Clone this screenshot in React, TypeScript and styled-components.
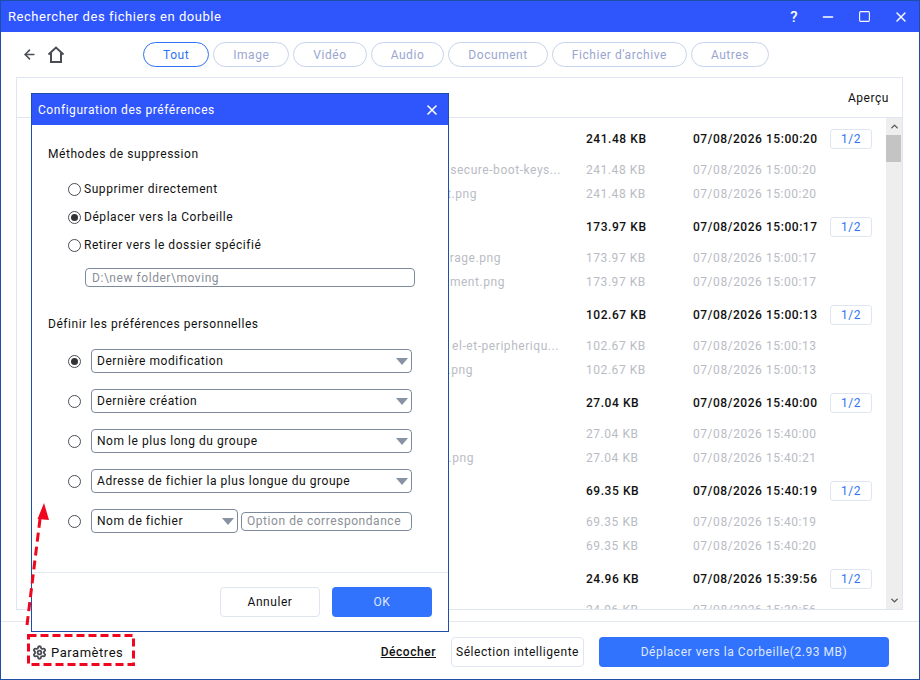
import React from "react"
import styled, { createGlobalStyle } from "styled-components"
import { ArrowLeft, ChevronDown, ChevronUp, Minus, Settings, Square, X } from "lucide-react"

const FONT = `Roboto, "Liberation Sans", sans-serif`

const GlobalStyle = createGlobalStyle`
  html, body {
    margin: 0;
    padding: 0;
    background: #fff;
  }
  body {
    font-family: ${FONT};
    font-size: 12px;
    letter-spacing: 0.55px;
  }
`

const tabs = ["Tout", "Image", "Vidéo", "Audio", "Document", "Fichier d'archive", "Autres"]

interface SubRow {
  name: string
  end: number
  date: string
}

interface Group {
  size: string
  date: string
  subs: SubRow[]
}

const groups: Group[] = [
  {
    size: "241.48 KB",
    date: "07/08/2026 15:00:20",
    subs: [
      { name: "secure-boot-keys...", end: 561, date: "07/08/2026 15:00:20" },
      { name: "t.png", end: 477, date: "07/08/2026 15:00:20" },
    ],
  },
  {
    size: "173.97 KB",
    date: "07/08/2026 15:00:17",
    subs: [
      { name: "rage.png", end: 501, date: "07/08/2026 15:00:17" },
      { name: "nment.png", end: 505, date: "07/08/2026 15:00:17" },
    ],
  },
  {
    size: "102.67 KB",
    date: "07/08/2026 15:00:13",
    subs: [
      { name: "el-et-peripheriqu...", end: 559, date: "07/08/2026 15:00:13" },
      { name: ".png", end: 473, date: "07/08/2026 15:00:13" },
    ],
  },
  {
    size: "27.04 KB",
    date: "07/08/2026 15:40:00",
    subs: [
      { name: "", end: 0, date: "07/08/2026 15:40:00" },
      { name: ".png", end: 474, date: "07/08/2026 15:40:21" },
    ],
  },
  {
    size: "69.35 KB",
    date: "07/08/2026 15:40:19",
    subs: [
      { name: "", end: 0, date: "07/08/2026 15:40:19" },
      { name: "", end: 0, date: "07/08/2026 15:40:20" },
    ],
  },
  {
    size: "24.96 KB",
    date: "07/08/2026 15:39:56",
    subs: [{ name: "", end: 0, date: "07/08/2026 15:39:56" }],
  },
]

const deleteMethods = [
  { label: "Supprimer directement", checked: false },
  { label: "Déplacer vers la Corbeille", checked: true },
  { label: "Retirer vers le dossier spécifié", checked: false },
]

const preferences = [
  { label: "Dernière modification", checked: true },
  { label: "Dernière création", checked: false },
  { label: "Nom le plus long du groupe", checked: false },
  { label: "Adresse de fichier la plus longue du groupe", checked: false },
]

const Caret = () => (
  <svg width="12" height="7" viewBox="0 0 12 7">
    <path d="M0 0h12L6 7z" fill="#8792a3" />
  </svg>
)

const HomeIcon = () => (
  <svg width="18" height="18" viewBox="0 0 18 18" fill="none" stroke="#4a4d55" strokeWidth="2">
    <path d="M1.5 8.5 9 1.5l7.5 7" />
    <path d="M4 7v9h10V7" />
  </svg>
)

export default function App() {
  return (
    <>
      <GlobalStyle />
      <S.Window>
        <S.TitleBar>
          <S.TitleText>Rechercher des fichiers en double</S.TitleText>
          <S.WindowControls>
            <S.Help>?</S.Help>
            <Minus size={16} strokeWidth={2} />
            <Square size={13} strokeWidth={2} />
            <X size={16} strokeWidth={2} />
          </S.WindowControls>
        </S.TitleBar>

        <S.Toolbar>
          <S.NavIcons>
            <ArrowLeft size={15} strokeWidth={2.4} color="#4a4d55" />
            <HomeIcon />
          </S.NavIcons>
          <S.Tabs>
            {tabs.map((t, i) => (
              <S.Tab key={t} $active={i === 0}>{t}</S.Tab>
            ))}
          </S.Tabs>
        </S.Toolbar>

        <S.Panel>
          <S.PanelHeader>
            <S.HeaderCell>Aperçu</S.HeaderCell>
          </S.PanelHeader>
          <S.PanelBody>
            <S.List>
              {groups.map((g) => (
                <S.Group key={g.size}>
                  <S.Row $main>
                    <S.Name />
                    <S.Size>{g.size}</S.Size>
                    <S.Date>{g.date}</S.Date>
                    <S.PreviewButton>1/2</S.PreviewButton>
                  </S.Row>
                  {g.subs.map((s, i) => (
                    <S.Row key={i}>
                      <S.Name>
                        {s.name && <S.NameFragment style={{ marginRight: 586 - s.end }}>{s.name}</S.NameFragment>}
                      </S.Name>
                      <S.Size>{g.size}</S.Size>
                      <S.Date>{s.date}</S.Date>
                    </S.Row>
                  ))}
                </S.Group>
              ))}
            </S.List>
            <S.Scrollbar>
              <S.ScrollArrow><ChevronUp size={11} strokeWidth={3} /></S.ScrollArrow>
              <S.ScrollThumb />
              <S.ScrollArrow><ChevronDown size={11} strokeWidth={3} /></S.ScrollArrow>
            </S.Scrollbar>
          </S.PanelBody>
        </S.Panel>

        <S.Footer>
          <S.SettingsLink>
            <Settings size={15} strokeWidth={3} color="#4a4d55" />
            Paramètres
          </S.SettingsLink>
          <S.FooterActions>
            <S.Uncheck>Décocher</S.Uncheck>
            <S.SmartButton>Sélection intelligente</S.SmartButton>
            <S.MoveButton>Déplacer vers la Corbeille(2.93 MB)</S.MoveButton>
          </S.FooterActions>
        </S.Footer>

        <S.Modal>
          <S.ModalHeader>
            <span>Configuration des préférences</span>
            <X size={16} strokeWidth={2.4} />
          </S.ModalHeader>
          <S.ModalBody>
            <S.SectionTitle>Méthodes de suppression</S.SectionTitle>
            <S.MethodList>
              {deleteMethods.map((m) => (
                <S.Method key={m.label}>
                  <S.Radio $checked={m.checked} />
                  {m.label}
                </S.Method>
              ))}
            </S.MethodList>
            <S.PathInput>D:\new folder\moving</S.PathInput>
            <S.SectionTitle>Définir les préférences personnelles</S.SectionTitle>
            <S.PrefList>
              {preferences.map((p) => (
                <S.PrefRow key={p.label}>
                  <S.Radio $checked={p.checked} />
                  <S.Select>
                    {p.label}
                    <Caret />
                  </S.Select>
                </S.PrefRow>
              ))}
              <S.PrefRow>
                <S.Radio />
                <S.Select $short>
                  Nom de fichier
                  <Caret />
                </S.Select>
                <S.MatchInput>Option de correspondance</S.MatchInput>
              </S.PrefRow>
            </S.PrefList>
          </S.ModalBody>
          <S.ModalFooter>
            <S.CancelButton>Annuler</S.CancelButton>
            <S.OkButton>OK</S.OkButton>
          </S.ModalFooter>
        </S.Modal>

        <S.Callout width="920" height="680" viewBox="0 0 920 680">
          <rect x="28.5" y="635.5" width="105" height="29" fill="none" stroke="#f0061e" strokeWidth="3" strokeDasharray="8 4" />
          <path d="M27 625 40 519" fill="none" stroke="#f0061e" strokeWidth="3" strokeDasharray="9 5" />
          <path d="M37.5 519 44 503 49 520z" fill="#f0061e" />
        </S.Callout>
      </S.Window>
    </>
  )
}

const S = {
  Window: styled.div`
    position: relative;
    box-sizing: border-box;
    display: flex;
    flex-direction: column;
    width: 920px;
    height: 680px;
    border: 1px solid #1c4fa5;
    background: #fff;
    overflow: hidden;
    color: #111;
  `,
  TitleBar: styled.div`
    display: flex;
    flex: none;
    align-items: center;
    justify-content: space-between;
    height: 31px;
    padding: 0 10px 0 7px;
    background: #2f55fd;
    color: #fff;
  `,
  TitleText: styled.div`
    font-size: 13px;
  `,
  WindowControls: styled.div`
    display: flex;
    align-items: center;
    gap: 22px;
  `,
  Help: styled.span`
    font-size: 15px;
    font-weight: 500;
  `,
  Toolbar: styled.div`
    display: flex;
    flex: none;
    align-items: center;
    height: 45px;
    padding-left: 21px;
  `,
  NavIcons: styled.div`
    display: flex;
    align-items: center;
    gap: 10px;
    width: 121px;
  `,
  Tabs: styled.div`
    display: flex;
    gap: 4px;
  `,
  Tab: styled.div<{ $active?: boolean }>`
    box-sizing: border-box;
    display: flex;
    align-items: center;
    height: 25px;
    padding: 0 19px;
    border: 1px solid ${(p) => (p.$active ? "#2f73f5" : "#c5d3ec")};
    border-radius: 13px;
    color: ${(p) => (p.$active ? "#2f73f5" : "#9aa6cf")};
  `,
  Panel: styled.div`
    display: flex;
    flex: none;
    flex-direction: column;
    height: 531px;
    margin: 0 16px 0 15px;
    border: 1px solid #dfe6f1;
  `,
  PanelHeader: styled.div`
    display: flex;
    flex: none;
    align-items: center;
    justify-content: flex-end;
    height: 39px;
    padding-right: 13px;
    border-bottom: 1px solid #dfe6f1;
  `,
  HeaderCell: styled.div``,
  PanelBody: styled.div`
    display: flex;
    flex: 1;
    min-height: 0;
  `,
  List: styled.div`
    flex: 1;
    overflow: hidden;
  `,
  Group: styled.div`
    display: flex;
    flex-direction: column;
    height: 88px;
    padding-top: 8px;
    box-sizing: border-box;
  `,
  Row: styled.div<{ $main?: boolean }>`
    display: flex;
    align-items: center;
    flex: none;
    height: ${(p) => (p.$main ? "26px" : "24px")};
    margin-bottom: ${(p) => (p.$main ? "6px" : "0")};
    color: ${(p) => (p.$main ? "#111" : "#b9bcc4")};
    font-weight: ${(p) => (p.$main ? 500 : 400)};
  `,
  Name: styled.div`
    display: flex;
    justify-content: flex-end;
    flex: none;
    width: 569px;
    white-space: nowrap;
  `,
  NameFragment: styled.span``,
  Size: styled.div`
    flex: none;
    width: 107px;
  `,
  Date: styled.div`
    flex: none;
    width: 137px;
    white-space: nowrap;
  `,
  PreviewButton: styled.div`
    box-sizing: border-box;
    display: flex;
    align-items: center;
    justify-content: center;
    width: 42px;
    height: 20px;
    border: 1px solid #dfe6f1;
    border-radius: 3px;
    color: #2f73f5;
    font-weight: 400;
  `,
  Scrollbar: styled.div`
    display: flex;
    flex: none;
    flex-direction: column;
    width: 16px;
    background: #eeeeee;
  `,
  ScrollArrow: styled.div`
    display: flex;
    flex: none;
    align-items: center;
    justify-content: center;
    height: 17px;
    color: #555;
    &:last-child {
      margin-top: auto;
    }
  `,
  ScrollThumb: styled.div`
    flex: none;
    width: 15px;
    height: 27px;
    background: #c4c4c4;
  `,
  Footer: styled.div`
    display: flex;
    flex: 1;
    align-items: center;
    justify-content: space-between;
    margin-top: 11px;
    padding: 3px 30px 0 31px;
    border-top: 1px solid #e4e8f0;
  `,
  SettingsLink: styled.div`
    display: flex;
    align-items: center;
    gap: 4px;
    font-size: 13px;
  `,
  FooterActions: styled.div`
    display: flex;
    align-items: center;
  `,
  Uncheck: styled.div`
    margin-right: 15px;
    text-decoration: underline;
    font-weight: 500;
  `,
  SmartButton: styled.div`
    box-sizing: border-box;
    display: flex;
    align-items: center;
    justify-content: center;
    width: 133px;
    height: 30px;
    margin-right: 15px;
    border: 1px solid #dfe6f1;
    border-radius: 4px;
  `,
  MoveButton: styled.div`
    display: flex;
    align-items: center;
    justify-content: center;
    width: 290px;
    height: 30px;
    border-radius: 4px;
    background: #3273fd;
    color: #dfe8ff;
  `,
  Modal: styled.div`
    position: absolute;
    left: 30px;
    top: 92px;
    box-sizing: border-box;
    display: flex;
    flex-direction: column;
    width: 418px;
    height: 539px;
    border: 1px solid #1c4fa5;
    background: #fff;
  `,
  ModalHeader: styled.div`
    display: flex;
    flex: none;
    align-items: center;
    justify-content: space-between;
    height: 31px;
    padding: 0 8px 0 6px;
    background: #2f55fd;
    color: #fff;
  `,
  ModalBody: styled.div`
    flex: 1;
    padding: 21px 36px 0 16px;
  `,
  SectionTitle: styled.div`
    line-height: 16px;
  `,
  MethodList: styled.div`
    display: flex;
    flex-direction: column;
    gap: 8px;
    margin: 17px 0 0 20px;
  `,
  Method: styled.div`
    display: flex;
    align-items: center;
    gap: 3px;
    height: 20px;
  `,
  Radio: styled.span<{ $checked?: boolean }>`
    box-sizing: border-box;
    display: inline-flex;
    flex: none;
    align-items: center;
    justify-content: center;
    width: 13px;
    height: 13px;
    border: 1px solid #4a4d55;
    border-radius: 50%;
    &::after {
      content: "";
      display: ${(p) => (p.$checked ? "block" : "none")};
      width: 7px;
      height: 7px;
      border-radius: 50%;
      background: #333;
    }
  `,
  PathInput: styled.div`
    box-sizing: border-box;
    display: flex;
    align-items: center;
    width: 330px;
    height: 19px;
    margin: 13px 0 29px 37px;
    padding-left: 6px;
    border: 1px solid #7d8a9e;
    border-radius: 4px;
    color: #8b8f96;
  `,
  PrefList: styled.div`
    display: flex;
    flex-direction: column;
    gap: 16px;
    margin: 17px 0 0 20px;
  `,
  PrefRow: styled.div`
    display: flex;
    align-items: center;
    gap: 3px;
    height: 24px;
    & > span:first-child {
      margin-right: 7px;
    }
  `,
  Select: styled.div<{ $short?: boolean }>`
    box-sizing: border-box;
    display: flex;
    align-items: center;
    justify-content: space-between;
    width: ${(p) => (p.$short ? "147px" : "321px")};
    height: 24px;
    padding: 0 3px 0 5px;
    border: 1px solid #7d8a9e;
    border-radius: 4px;
  `,
  MatchInput: styled.div`
    box-sizing: border-box;
    display: flex;
    align-items: center;
    width: 171px;
    height: 19px;
    padding-left: 5px;
    border: 1px solid #7d8a9e;
    border-radius: 4px;
    color: #8b8f96;
    white-space: nowrap;
  `,
  ModalFooter: styled.div`
    display: flex;
    flex: none;
    justify-content: flex-end;
    gap: 12px;
    height: 59px;
    padding: 14px 16px 0 0;
    box-sizing: border-box;
    border-top: 1px solid #e4e8f0;
  `,
  CancelButton: styled.div`
    box-sizing: border-box;
    display: flex;
    align-items: center;
    justify-content: center;
    width: 100px;
    height: 30px;
    border: 1px solid #dfe6f1;
    border-radius: 4px;
  `,
  OkButton: styled.div`
    display: flex;
    align-items: center;
    justify-content: center;
    width: 100px;
    height: 30px;
    border-radius: 4px;
    background: #3273fd;
    color: #dfe8ff;
  `,
  Callout: styled.svg`
    position: absolute;
    left: -1px;
    top: -1px;
    pointer-events: none;
  `,
}
